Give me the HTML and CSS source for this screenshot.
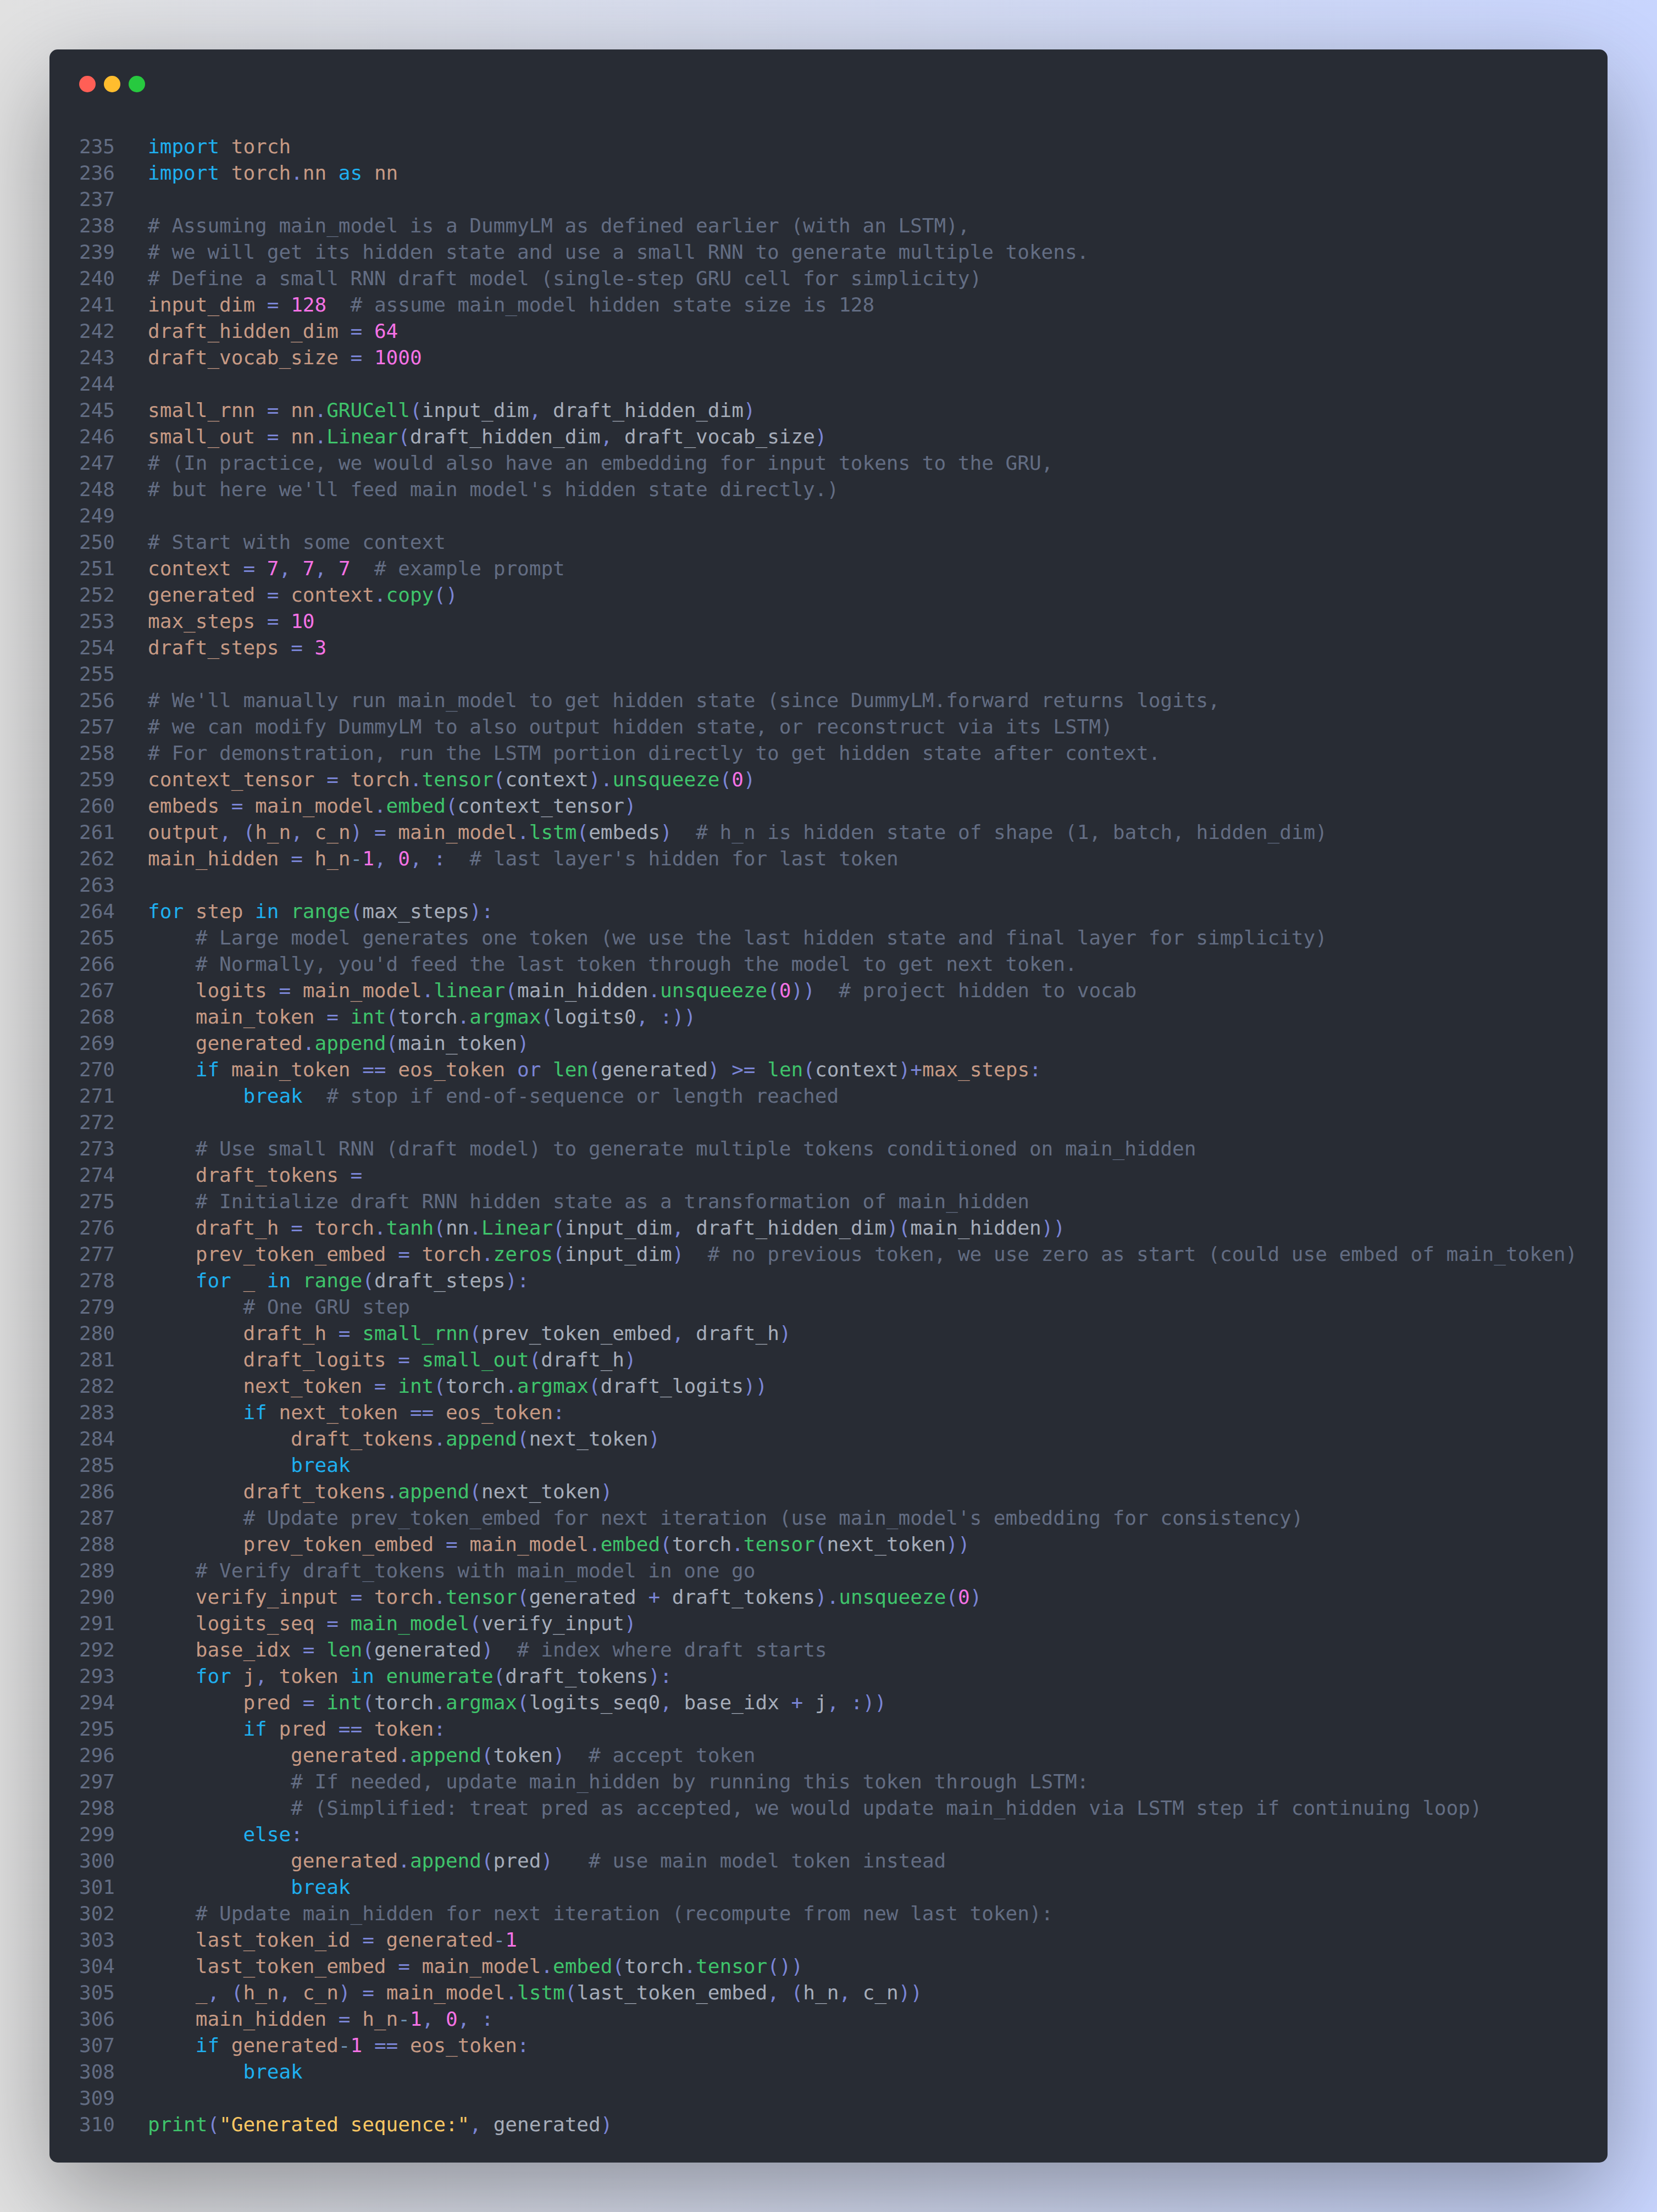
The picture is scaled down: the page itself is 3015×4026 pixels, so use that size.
FILE: index.html
```
<!DOCTYPE html>
<html lang="en">
<head>
<meta charset="utf-8">
<title>Code</title>
<link rel="stylesheet" href="styles.css">
</head>
<body>
<main class="window">
<div class="dots"><span class="dot red"></span><span class="dot yellow"></span><span class="dot green"></span></div>
<div class="code">
<div class="gutter">235
236
237
238
239
240
241
242
243
244
245
246
247
248
249
250
251
252
253
254
255
256
257
258
259
260
261
262
263
264
265
266
267
268
269
270
271
272
273
274
275
276
277
278
279
280
281
282
283
284
285
286
287
288
289
290
291
292
293
294
295
296
297
298
299
300
301
302
303
304
305
306
307
308
309
310</div>
<pre class="src"><b>import</b> torch
<b>import</b> torch<i>.</i>nn <b>as</b> nn

<s># Assuming main_model is a DummyLM as defined earlier (with an LSTM),</s>
<s># we will get its hidden state and use a small RNN to generate multiple tokens.</s>
<s># Define a small RNN draft model (single-step GRU cell for simplicity)</s>
input_dim <i>=</i> <u>128</u>  <s># assume main_model hidden state size is 128</s>
draft_hidden_dim <i>=</i> <u>64</u>
draft_vocab_size <i>=</i> <u>1000</u>

small_rnn <i>=</i> nn<i>.</i><em>GRUCell</em><i>(</i><q>input_dim</q><i>,</i> <q>draft_hidden_dim</q><i>)</i>
small_out <i>=</i> nn<i>.</i><em>Linear</em><i>(</i><q>draft_hidden_dim</q><i>,</i> <q>draft_vocab_size</q><i>)</i>
<s># (In practice, we would also have an embedding for input tokens to the GRU,</s>
<s># but here we'll feed main model's hidden state directly.)</s>

<s># Start with some context</s>
context <i>=</i> <u>7</u><i>,</i> <u>7</u><i>,</i> <u>7</u>  <s># example prompt</s>
generated <i>=</i> context<i>.</i><em>copy</em><i>()</i>
max_steps <i>=</i> <u>10</u>
draft_steps <i>=</i> <u>3</u>

<s># We'll manually run main_model to get hidden state (since DummyLM.forward returns logits,</s>
<s># we can modify DummyLM to also output hidden state, or reconstruct via its LSTM)</s>
<s># For demonstration, run the LSTM portion directly to get hidden state after context.</s>
context_tensor <i>=</i> torch<i>.</i><em>tensor</em><i>(</i><q>context</q><i>).</i><em>unsqueeze</em><i>(</i><u>0</u><i>)</i>
embeds <i>=</i> main_model<i>.</i><em>embed</em><i>(</i><q>context_tensor</q><i>)</i>
output<i>,</i> <i>(</i>h_n<i>,</i> c_n<i>)</i> <i>=</i> main_model<i>.</i><em>lstm</em><i>(</i><q>embeds</q><i>)</i>  <s># h_n is hidden state of shape (1, batch, hidden_dim)</s>
main_hidden <i>=</i> h_n<a>-</a><u>1</u><i>,</i> <u>0</u><i>,</i> <i>:</i>  <s># last layer's hidden for last token</s>

<b>for</b> step <b>in</b> <em>range</em><i>(</i><q>max_steps</q><i>):</i>
    <s># Large model generates one token (we use the last hidden state and final layer for simplicity)</s>
    <s># Normally, you'd feed the last token through the model to get next token.</s>
    logits <i>=</i> main_model<i>.</i><em>linear</em><i>(</i><q>main_hidden</q><i>.</i><em>unsqueeze</em><i>(</i><u>0</u><i>))</i>  <s># project hidden to vocab</s>
    main_token <i>=</i> <em>int</em><i>(</i><q>torch</q><i>.</i><em>argmax</em><i>(</i><q>logits0</q><i>,</i> <i>:))</i>
    generated<i>.</i><em>append</em><i>(</i><q>main_token</q><i>)</i>
    <b>if</b> main_token <i>==</i> eos_token <i>or</i> <em>len</em><i>(</i><q>generated</q><i>)</i> <i>&gt;=</i> <em>len</em><i>(</i><q>context</q><i>)+</i>max_steps<i>:</i>
        <b>break</b>  <s># stop if end-of-sequence or length reached</s>

    <s># Use small RNN (draft model) to generate multiple tokens conditioned on main_hidden</s>
    draft_tokens <i>=</i> 
    <s># Initialize draft RNN hidden state as a transformation of main_hidden</s>
    draft_h <i>=</i> torch<i>.</i><em>tanh</em><i>(</i><q>nn</q><i>.</i><em>Linear</em><i>(</i><q>input_dim</q><i>,</i> <q>draft_hidden_dim</q><i>)(</i><q>main_hidden</q><i>))</i>
    prev_token_embed <i>=</i> torch<i>.</i><em>zeros</em><i>(</i><q>input_dim</q><i>)</i>  <s># no previous token, we use zero as start (could use embed of main_token)</s>
    <b>for</b> _ <b>in</b> <em>range</em><i>(</i><q>draft_steps</q><i>):</i>
        <s># One GRU step</s>
        draft_h <i>=</i> <em>small_rnn</em><i>(</i><q>prev_token_embed</q><i>,</i> <q>draft_h</q><i>)</i>
        draft_logits <i>=</i> <em>small_out</em><i>(</i><q>draft_h</q><i>)</i>
        next_token <i>=</i> <em>int</em><i>(</i><q>torch</q><i>.</i><em>argmax</em><i>(</i><q>draft_logits</q><i>))</i>
        <b>if</b> next_token <i>==</i> eos_token<i>:</i>
            draft_tokens<i>.</i><em>append</em><i>(</i><q>next_token</q><i>)</i>
            <b>break</b>
        draft_tokens<i>.</i><em>append</em><i>(</i><q>next_token</q><i>)</i>
        <s># Update prev_token_embed for next iteration (use main_model's embedding for consistency)</s>
        prev_token_embed <i>=</i> main_model<i>.</i><em>embed</em><i>(</i><q>torch</q><i>.</i><em>tensor</em><i>(</i><q>next_token</q><i>))</i>
    <s># Verify draft_tokens with main_model in one go</s>
    verify_input <i>=</i> torch<i>.</i><em>tensor</em><i>(</i><q>generated</q> <i>+</i> <q>draft_tokens</q><i>).</i><em>unsqueeze</em><i>(</i><u>0</u><i>)</i>
    logits_seq <i>=</i> <em>main_model</em><i>(</i><q>verify_input</q><i>)</i>
    base_idx <i>=</i> <em>len</em><i>(</i><q>generated</q><i>)</i>  <s># index where draft starts</s>
    <b>for</b> j<i>,</i> token <b>in</b> <em>enumerate</em><i>(</i><q>draft_tokens</q><i>):</i>
        pred <i>=</i> <em>int</em><i>(</i><q>torch</q><i>.</i><em>argmax</em><i>(</i><q>logits_seq0</q><i>,</i> <q>base_idx</q> <i>+</i> <q>j</q><i>,</i> <i>:))</i>
        <b>if</b> pred <i>==</i> token<i>:</i>
            generated<i>.</i><em>append</em><i>(</i><q>token</q><i>)</i>  <s># accept token</s>
            <s># If needed, update main_hidden by running this token through LSTM:</s>
            <s># (Simplified: treat pred as accepted, we would update main_hidden via LSTM step if continuing loop)</s>
        <b>else</b><i>:</i>
            generated<i>.</i><em>append</em><i>(</i><q>pred</q><i>)</i>   <s># use main model token instead</s>
            <b>break</b>
    <s># Update main_hidden for next iteration (recompute from new last token):</s>
    last_token_id <i>=</i> generated<a>-</a><u>1</u>
    last_token_embed <i>=</i> main_model<i>.</i><em>embed</em><i>(</i><q>torch</q><i>.</i><em>tensor</em><i>())</i>
    _<i>,</i> <i>(</i>h_n<i>,</i> c_n<i>)</i> <i>=</i> main_model<i>.</i><em>lstm</em><i>(</i><q>last_token_embed</q><i>,</i> <i>(</i><q>h_n</q><i>,</i> <q>c_n</q><i>))</i>
    main_hidden <i>=</i> h_n<a>-</a><u>1</u><i>,</i> <u>0</u><i>,</i> <i>:</i>
    <b>if</b> generated<a>-</a><u>1</u> <i>==</i> eos_token<i>:</i>
        <b>break</b>

<em>print</em><i>(</i><var>"Generated sequence:"</var><i>,</i> <q>generated</q><i>)</i></pre>
</div>
</main>
</body>
</html>
```

FILE: styles.css
```
html, body { margin: 0; padding: 0; }
body {
  width: 3015px;
  height: 4026px;
  box-sizing: border-box;
  padding: 90px;
  background: linear-gradient(90deg, #e2e2e2, #c9d6ff);
  overflow: hidden;
}
.window {
  width: 2835px;
  box-sizing: border-box;
  padding: 48px 54px 45px;
  background: #282c34;
  border-radius: 15px;
  box-shadow: 0 60px 180px rgba(0, 0, 0, 0.35);
  font-family: "DejaVu Sans Mono", monospace;
  font-size: 36px;
  line-height: 48px;
}
.dots { display: flex; gap: 15px; height: 30px; margin-bottom: 75px; }
.dot { width: 30px; height: 30px; border-radius: 50%; }
.red { background: #ff5f56; }
.yellow { background: #ffbd2e; }
.green { background: #27c93f; }
.code { display: flex; gap: 60px; }
.gutter { white-space: pre; color: #636d83; flex: none; }
.src {
  margin: 0;
  font: inherit;
  color: #c79a84;
  white-space: pre;
}
.src b { font-weight: normal; color: #1fb0f0; }
.src i { font-style: normal; color: #7a85d6; }
.src a { color: #6f93b5; }
.src s { text-decoration: none; color: #636d83; }
.src u { text-decoration: none; color: #f572e5; }
.src em { font-style: normal; color: #3fc46b; }
.src q { quotes: none; color: #a6adba; }
.src var { font-style: normal; color: #f9c763; }
```
